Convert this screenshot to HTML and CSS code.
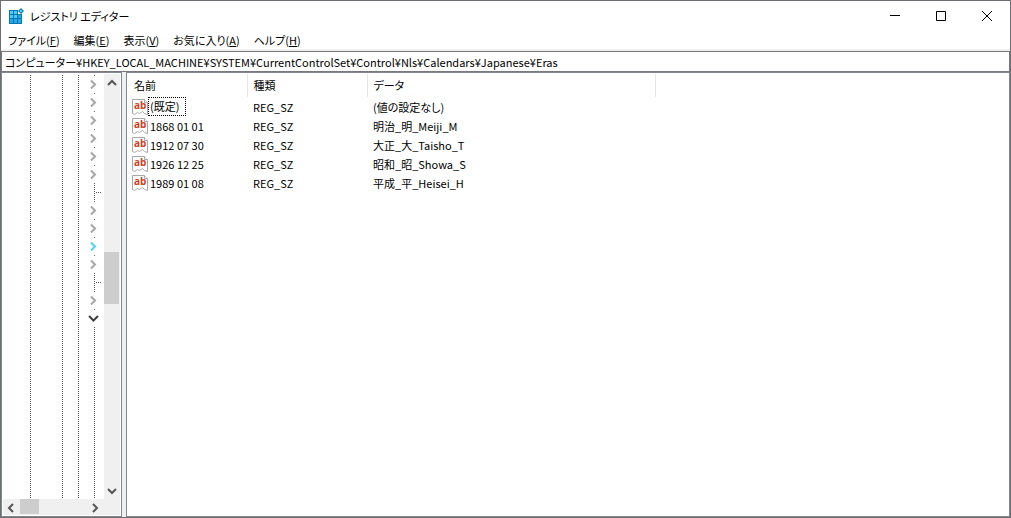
FILE: index.html
```html
<!DOCTYPE html>
<html lang="ja">
<head>
    <meta charset="utf-8">
    <title>レジストリ エディター</title>
    <link rel="stylesheet" href="styles.css">
</head>
<body>
    <svg class="defs" aria-hidden="true">
        <symbol id="closed" viewBox="0 0 16 18">
            <path d="M5 5.500l4 4-4 4" fill="none" stroke="currentColor" stroke-width="2"/>
            <path d="M8 0h1v1h-1z" fill="#666"/>
        </symbol>
        <symbol id="open" viewBox="0 0 16 18">
            <path d="M3 7l4.500 4.500L12 7" fill="none" stroke="currentColor" stroke-width="2"/>
            <path d="M8 0h1v1h-1z" fill="#666"/>
        </symbol>
        <symbol id="branch" viewBox="0 0 16 18">
            <path d="M8.500 0v18M10 9.500h6" fill="none" stroke="#555" stroke-dasharray="1 1"/>
        </symbol>
        <symbol id="paper" viewBox="0 0 16 16">
            <path d="M.5.5h12l3 3v12l-3-1-2-2-3 2-2-1-3 2-2-1z" fill="#fff" stroke="#a8a8a8"/>
            <path d="M12.500.5v3h3" fill="#fff" stroke="#a8a8a8"/>
        </symbol>
    </svg>

    <div class="window">
        <header class="titlebar">
            <svg class="logo" width="16" height="16" viewBox="0 0 16 16">
                <path d="M1 2h9v4h4v10H1z" fill="#0878b4"/>
                <path d="M2 3h3v3H2zM6 3h3v3H6zM2 7h3v3H2zM6 7h3v3H6z" fill="#4fcbfb"/>
                <path d="M10 7h3v3h-3zM2 11h3v4H2zM6 11h3v4H6zM10 11h3v4h-3z" fill="#28a8e0"/>
                <path d="M10 0h6v6h-6z" fill="#fff"/>
                <path d="M13 0l3 3-3 3-3-3z" fill="#0878b4"/>
                <path d="M13 1.500L14.500 3 13 4.500 11.500 3z" fill="#5ed2ff"/>
            </svg>
            <h1>レジストリ エディター</h1>
            <div class="controls">
                <button aria-label="最小化"><svg width="12" height="12"><path d="M1 5.500h10"/></svg></button>
                <button aria-label="最大化"><svg width="12" height="12"><path d="M1.500 1.500h9v9h-9z"/></svg></button>
                <button aria-label="閉じる"><svg width="12" height="12"><path d="M1 1l10 10M11 1L1 11"/></svg></button>
            </div>
        </header>

        <nav class="menu">
            <button>ファイル(<u>F</u>)</button>
            <button>編集(<u>E</u>)</button>
            <button>表示(<u>V</u>)</button>
            <button>お気に入り(<u>A</u>)</button>
            <button>ヘルプ(<u>H</u>)</button>
        </nav>

        <input class="address" type="text" aria-label="アドレス" value="コンピューター¥HKEY_LOCAL_MACHINE¥SYSTEM¥CurrentControlSet¥Control¥Nls¥Calendars¥Japanese¥Eras">

        <main class="panes">
            <div class="tree-pane">
                <ul class="tree">
                    <li><i class="g1"></i><i class="g2"></i><i class="g3"></i><button aria-label="展開"><svg><use href="#closed"/></svg></button></li>
                    <li><i class="g1"></i><i class="g2"></i><i class="g3"></i><button aria-label="展開"><svg><use href="#closed"/></svg></button></li>
                    <li><i class="g1"></i><i class="g2"></i><i class="g3"></i><button aria-label="展開"><svg><use href="#closed"/></svg></button></li>
                    <li><i class="g1"></i><i class="g2"></i><i class="g3"></i><button aria-label="展開"><svg><use href="#closed"/></svg></button></li>
                    <li><i class="g1"></i><i class="g2"></i><i class="g3"></i><button aria-label="展開"><svg><use href="#closed"/></svg></button></li>
                    <li><i class="g1"></i><i class="g2"></i><i class="g3"></i><button aria-label="展開"><svg><use href="#closed"/></svg></button></li>
                    <li><i class="g1"></i><i class="g2"></i><i class="g3"></i><svg><use href="#branch"/></svg></li>
                    <li><i class="g1"></i><i class="g2"></i><i class="g3"></i><button aria-label="展開"><svg><use href="#closed"/></svg></button></li>
                    <li><i class="g1"></i><i class="g2"></i><i class="g3"></i><button aria-label="展開"><svg><use href="#closed"/></svg></button></li>
                    <li><i class="g1"></i><i class="g2"></i><i class="g3"></i><button class="hot" aria-label="展開"><svg><use href="#closed"/></svg></button></li>
                    <li><i class="g1"></i><i class="g2"></i><i class="g3"></i><button aria-label="展開"><svg><use href="#closed"/></svg></button></li>
                    <li><i class="g1"></i><i class="g2"></i><i class="g3"></i><svg><use href="#branch"/></svg></li>
                    <li><i class="g1"></i><i class="g2"></i><i class="g3"></i><button aria-label="展開"><svg><use href="#closed"/></svg></button></li>
                    <li><i class="g1"></i><i class="g2"></i><i class="g3"></i><button class="expanded" aria-label="折りたたむ"><svg><use href="#open"/></svg></button></li>
                    <li class="rest"><i class="g1"></i><i class="g2"></i><i class="g2"></i><i class="g3"></i></li>
                </ul>
                <div class="vscroll">
                    <button aria-label="上へ"><svg width="10" height="8"><path d="M1 6l4-4 4 4"/></svg></button>
                    <div class="track"><div class="thumb"></div></div>
                    <button aria-label="下へ"><svg width="10" height="8"><path d="M1 2l4 4 4-4"/></svg></button>
                </div>
                <div class="hscroll">
                    <button aria-label="左へ"><svg width="8" height="10"><path d="M6 1L2 5l4 4"/></svg></button>
                    <div class="track"><div class="thumb"></div></div>
                    <button aria-label="右へ"><svg width="8" height="10"><path d="M2 1l4 4-4 4"/></svg></button>
                </div>
            </div>

            <div class="list-pane">
                <table>
                    <thead>
                        <tr><th class="name">名前</th><th class="type">種類</th><th class="data">データ</th></tr>
                    </thead>
                    <tbody>
                        <tr><td><div class="value"><svg><use href="#paper"/><text x="2" y="10">ab</text></svg><span class="focused">(既定)</span></div></td><td>REG_SZ</td><td>(値の設定なし)</td></tr>
                        <tr><td><div class="value"><svg><use href="#paper"/><text x="2" y="10">ab</text></svg><span>1868 01 01</span></div></td><td>REG_SZ</td><td>明治_明_Meiji_M</td></tr>
                        <tr><td><div class="value"><svg><use href="#paper"/><text x="2" y="10">ab</text></svg><span>1912 07 30</span></div></td><td>REG_SZ</td><td>大正_大_Taisho_T</td></tr>
                        <tr><td><div class="value"><svg><use href="#paper"/><text x="2" y="10">ab</text></svg><span>1926 12 25</span></div></td><td>REG_SZ</td><td>昭和_昭_Showa_S</td></tr>
                        <tr><td><div class="value"><svg><use href="#paper"/><text x="2" y="10">ab</text></svg><span>1989 01 08</span></div></td><td>REG_SZ</td><td>平成_平_Heisei_H</td></tr>
                    </tbody>
                </table>
            </div>
        </main>
    </div>
</body>
</html>
```
FILE: styles.css
```css
* {
    box-sizing: border-box;
}

body {
    margin: 0;
    font-family: "Noto Sans CJK JP", sans-serif;
    font-size: 11px;
    line-height: 18px;
    font-feature-settings: "palt";
    color: #000;
}

button {
    font: inherit;
    font-feature-settings: inherit;
    color: inherit;
    background: none;
    border: none;
    padding: 0;
}

svg {
    display: block;
    flex: none;
}

.defs {
    position: absolute;
    width: 0;
    height: 0;
}

.window {
    display: flex;
    flex-direction: column;
    height: 100vh;
    border: 1px solid #6e6e72;
    background-color: #fff;
}

.titlebar {
    display: flex;
    align-items: center;
    height: 29px;
    padding-left: 7px;
}

.titlebar h1 {
    flex: 1;
    margin: 0 0 0 6px;
    font-size: 11px;
    font-weight: normal;
}

.controls {
    display: flex;
}

.controls button {
    display: flex;
    align-items: center;
    justify-content: center;
    width: 46px;
    height: 29px;
}

.controls path {
    fill: none;
    stroke: #000;
}

.menu {
    display: flex;
    gap: 14px;
    height: 21px;
    padding: 1px 7px;
    border-bottom: 2px solid #f0f0f0;
}

.address {
    height: 21px;
    padding: 0 3px;
    border: 1px solid #7a7a7e;
    font: inherit;
    font-feature-settings: inherit;
    color: inherit;
    outline: none;
}

.panes {
    display: flex;
    flex: 1;
    gap: 4px;
    min-height: 0;
    background-color: #f0f0f0;
}

.tree-pane {
    display: grid;
    grid-template-columns: 1fr 16px;
    grid-template-rows: 1fr 16px;
    width: 121px;
    padding: 1px;
    border: 1px solid #828790;
    background-color: #fff;
}

.tree {
    display: flex;
    flex-direction: column;
    min-height: 0;
    margin: 0;
    padding: 1px 0 0 27px;
    list-style: none;
    overflow: hidden;
}

.tree li {
    display: flex;
    flex: none;
    height: 18px;
}

.tree li.rest {
    flex: 1;
}

.tree svg {
    width: 16px;
    height: 18px;
}

.tree i {
    flex: none;
    background: repeating-linear-gradient(#555 0 1px, transparent 1px 2px) no-repeat 0 0 / 1px 100%;
}

.tree .g1 {
    width: 32px;
}

.tree .g2 {
    width: 16px;
}

.tree .g3 {
    width: 8px;
}

.tree button {
    color: #a6a6a6;
}

.tree .hot {
    color: #4ed0f9;
}

.tree .expanded {
    color: #404040;
}

.vscroll,
.hscroll {
    display: flex;
    background-color: #f0f0f0;
}

.vscroll {
    flex-direction: column;
}

.hscroll {
    grid-column: 1 / 3;
    padding-right: 17px;
}

.vscroll button,
.hscroll button {
    display: flex;
    align-items: center;
    justify-content: center;
    width: 16px;
    height: 17px;
}

.vscroll path,
.hscroll path {
    fill: none;
    stroke: #555;
    stroke-width: 2;
}

.track {
    flex: 1;
}

.thumb {
    background-color: #cdcdcd;
}

.vscroll .thumb {
    width: 15px;
    height: 52px;
    margin-top: 161px;
}

.hscroll .thumb {
    width: 19px;
    height: 15px;
    margin-left: 1px;
}

.list-pane {
    flex: 1;
    padding-top: 1px;
    border: 1px solid #828790;
    background-color: #fff;
}

table {
    table-layout: fixed;
    width: 528px;
    border-collapse: collapse;
}

th {
    height: 23px;
    padding: 0 6px 2px;
    border-right: 1px solid #e5e5e5;
    font-weight: normal;
    text-align: left;
}

.name {
    width: 120px;
    padding-left: 7px;
}

.type {
    width: 120px;
}

.data {
    width: 288px;
}

td {
    height: 19px;
    padding: 0 6px;
    white-space: nowrap;
}

td:first-child {
    padding-left: 5px;
}

.value {
    display: flex;
    align-items: center;
}

.value svg {
    width: 16px;
    height: 16px;
    overflow: visible;
}

.value text {
    font: bold 10px "Open Sans", sans-serif;
    fill: #cf3f1f;
}

.value span {
    padding: 0 2px;
}

.value .focused {
    padding: 0 6px 0 1px;
    border: 1px dotted #000;
    line-height: 17px;
}
```
